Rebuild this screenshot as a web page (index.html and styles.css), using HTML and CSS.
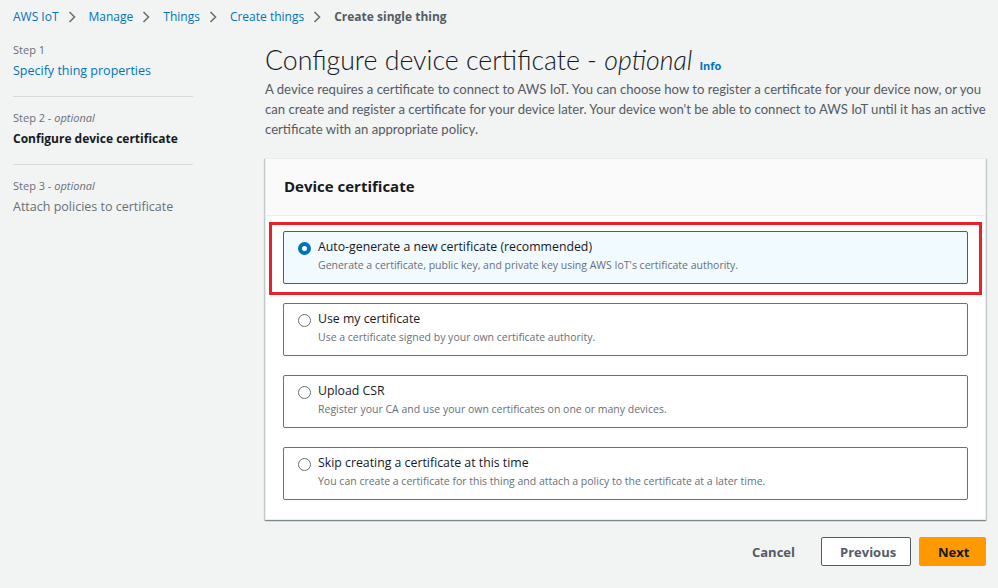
FILE: index.html
```html
<!DOCTYPE html>
<html lang="en">
<head>
<meta charset="utf-8">
<title>Create single thing</title>
<link rel="stylesheet" href="styles.css">
</head>
<body>
<nav class="crumbs">
  <a class="crumb">AWS IoT</a>
  <svg class="chev" viewBox="0 0 8 12" width="8" height="12"><path d="M1.5 1 L6.5 6 L1.5 11" fill="none" stroke="#687078" stroke-width="1.6"/></svg>
  <a class="crumb">Manage</a>
  <svg class="chev" viewBox="0 0 8 12" width="8" height="12"><path d="M1.5 1 L6.5 6 L1.5 11" fill="none" stroke="#687078" stroke-width="1.6"/></svg>
  <a class="crumb">Things</a>
  <svg class="chev" viewBox="0 0 8 12" width="8" height="12"><path d="M1.5 1 L6.5 6 L1.5 11" fill="none" stroke="#687078" stroke-width="1.6"/></svg>
  <a class="crumb">Create things</a>
  <svg class="chev" viewBox="0 0 8 12" width="8" height="12"><path d="M1.5 1 L6.5 6 L1.5 11" fill="none" stroke="#687078" stroke-width="1.6"/></svg>
  <span class="crumb current">Create single thing</span>
</nav>

<div class="layout">
  <aside class="steps">
    <div class="step">
      <div class="step-num">Step 1</div>
      <a class="step-link">Specify thing properties</a>
    </div>
    <div class="step">
      <div class="step-num">Step 2 - <i>optional</i></div>
      <div class="step-active">Configure device certificate</div>
    </div>
    <div class="step">
      <div class="step-num">Step 3 - <i>optional</i></div>
      <div class="step-disabled">Attach policies to certificate</div>
    </div>
  </aside>

  <main class="main">
    <h1 class="title"><span>Configure device certificate - <i>optional</i></span><a class="info">Info</a></h1>
    <p class="desc">A device requires a certificate to connect to AWS IoT. You can choose how to register a certificate for your device now, or you can create and register a certificate for your device later. Your device won't be able to connect to AWS IoT until it has an active certificate with an appropriate policy.</p>

    <section class="card">
      <header class="card-head">Device certificate</header>
      <div class="card-body">
        <div class="highlight-wrap">
          <label class="option selected">
            <span class="radio on"></span>
            <span class="opt-text">
              <span class="opt-title">Auto-generate a new certificate (recommended)</span>
              <span class="opt-desc">Generate a certificate, public key, and private key using AWS IoT's certificate authority.</span>
            </span>
          </label>
          <div class="highlight"></div>
        </div>
        <label class="option">
          <span class="radio"></span>
          <span class="opt-text">
            <span class="opt-title">Use my certificate</span>
            <span class="opt-desc">Use a certificate signed by your own certificate authority.</span>
          </span>
        </label>
        <label class="option">
          <span class="radio"></span>
          <span class="opt-text">
            <span class="opt-title">Upload CSR</span>
            <span class="opt-desc">Register your CA and use your own certificates on one or many devices.</span>
          </span>
        </label>
        <label class="option">
          <span class="radio"></span>
          <span class="opt-text">
            <span class="opt-title">Skip creating a certificate at this time</span>
            <span class="opt-desc">You can create a certificate for this thing and attach a policy to the certificate at a later time.</span>
          </span>
        </label>
      </div>
    </section>

    <div class="actions">
      <button class="btn link">Cancel</button>
      <button class="btn normal">Previous</button>
      <button class="btn primary">Next</button>
    </div>
  </main>
</div>
</body>
</html>
```

FILE: styles.css
```css
* { box-sizing: border-box; }
html, body { margin: 0; padding: 0; }
body {
  background: #f2f3f3;
  font-family: "Open Sans", "Noto Sans", sans-serif;
  color: #16191f;
  width: 998px;
  height: 588px;
  overflow: hidden;
}
a { cursor: pointer; }

.crumbs {
  display: flex;
  align-items: center;
  padding: 0 13px;
  height: 32px;
  font-size: 12px;
}
.crumb { color: #0073bb; }
.crumb.current { color: #545b64; font-weight: 700; }
.chev { margin: 1px 13px 0 9px; }

.layout {
  display: grid;
  grid-template-columns: 180px 721px;
  column-gap: 72px;
  padding-left: 13px;
}

.steps { padding-top: 11px; }
.step {
  padding-bottom: 16px;
  border-bottom: 1px solid #d5dbdb;
  margin-bottom: 14px;
}
.step:last-child { border-bottom: none; }
.step-num { font-size: 11px; color: #687078; line-height: 14px; }
.step-num i { font-style: italic; }
.step-link, .step-active, .step-disabled {
  display: block;
  font-size: 12.5px;
  line-height: 18px;
  margin-top: 5px;
}
.step-link { color: #0073bb; }
.step-active { color: #16191f; font-weight: 700; font-size: 12px; }
.step-disabled { color: #687078; }

.main { padding-top: 11px; }
.title {
  margin: 0;
  display: flex;
  align-items: baseline;
  gap: 7px;
  font-family: "Lato", "Open Sans", sans-serif;
  font-size: 26.7px;
  font-weight: 300;
  line-height: 34px;
  height: 34px;
  color: #16191f;
}
.title i { font-style: italic; }
.info {
  font-family: "Open Sans", sans-serif;
  font-size: 11px;
  font-weight: 700;
  color: #0073bb;
}
.desc {
  margin: 2px 0 0;
  font-family: "Lato", "Open Sans", sans-serif;
  font-size: 13.1px;
  line-height: 20px;
  color: #545b64;
}

.card {
  margin-top: 19px;
  background: #fff;
  border: 1px solid #eaeded;
  box-shadow: 0 1px 1px 0 rgba(0,28,36,.3), 1px 1px 1px 0 rgba(0,28,36,.15), -1px 1px 1px 0 rgba(0,28,36,.15);
}
.card-head {
  background: #fafafa;
  border-bottom: 1px solid #eaeded;
  height: 57px;
  padding: 17px 18px 0;
  font-size: 15px;
  font-weight: 700;
  color: #16191f;
}
.card-body {
  padding: 15px 17px 19px;
  display: flex;
  flex-direction: column;
  gap: 19px;
}

.highlight-wrap { position: relative; }
.highlight {
  position: absolute;
  left: -14px;
  right: -14px;
  top: -9px;
  bottom: -11px;
  border: 3px solid #e8222b;
  pointer-events: none;
}

.option {
  display: flex;
  align-items: flex-start;
  gap: 7px;
  height: 53px;
  padding: 6px 20px 0 14px;
  border: 1px solid #687078;
  border-radius: 2px;
  background: #fff;
}
.option.selected {
  background: #f1faff;
  border-color: #0073bb;
}
.radio {
  flex: none;
  width: 13px;
  height: 13px;
  margin-top: 4px;
  border-radius: 50%;
  border: 1.5px solid #687078;
  background: #fff;
}
.radio.on {
  border: 4px solid #0073bb;
}
.opt-text { display: flex; flex-direction: column; }
.opt-title { font-size: 12.3px; line-height: 18px; color: #16191f; }
.opt-desc { font-size: 10.5px; line-height: 16px; margin-top: 1px; color: #687078; }

.actions {
  display: flex;
  justify-content: flex-end;
  align-items: center;
  gap: 8px;
  margin-top: 17px;
}
.btn {
  font-family: inherit;
  font-size: 13px;
  font-weight: 700;
  height: 29px;
  padding: 0 18px;
  border-radius: 2px;
  cursor: pointer;
}
.btn.link {
  background: none;
  border: none;
  color: #545b64;
}
.btn.normal {
  background: #fff;
  border: 1px solid #545b64;
  color: #545b64;
  width: 90px;
}
.btn.primary {
  background: #ff9900;
  border: 1px solid #ff9900;
  color: #16191f;
  width: 67px;
}
```
